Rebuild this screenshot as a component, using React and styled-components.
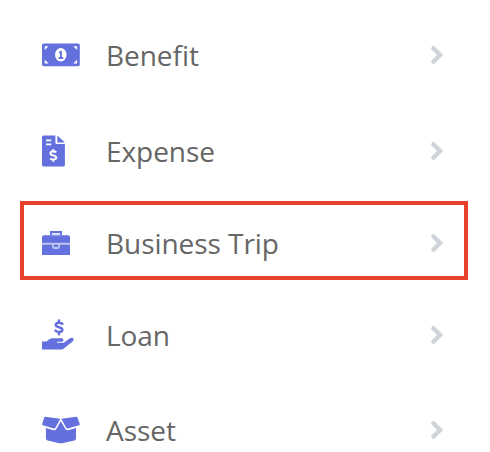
import React from 'react';
import styled, { createGlobalStyle } from 'styled-components';

const GlobalStyle = createGlobalStyle`
    body {
        margin: 0;
        background-color: #ffffff;
        font-family: 'Open Sans', sans-serif;
    }
`;

// Styled Components
const Menu = styled.nav`
    width: 490px;
    height: 452px;
    overflow: hidden;
    box-sizing: border-box;
    padding: 7px 22px 0 20px;
`;

const MenuItem = styled.div`
    display: flex;
    align-items: center;
    box-sizing: border-box;
    height: ${(props) => props.$height}px;
    margin: ${(props) => (props.$active ? '2px 0 7px' : '0')};
    padding: ${(props) => (props.$active ? '5px' : '0')} 20px 0 18px;
    border: 4px solid ${(props) => (props.$active ? '#e8412a' : 'transparent')};
`;

const IconSlot = styled.span`
    display: flex;
    width: 64px;
    color: #6370de;
`;

const Label = styled.span`
    flex: 1;
    font-size: 28px;
    line-height: 38px;
    letter-spacing: -0.05px;
    color: #666666;
`;

const Arrow = styled.svg`
    width: 14px;
    height: 22px;
    fill: none;
    stroke: #ced4da;
    stroke-width: 4.4;
    stroke-linecap: round;
`;

const DOLLAR = 'M3.1 -3.2C2.2 -4.2 0.9 -4.3 0 -4.3C-1.8 -4.3 -3 -3.5 -3 -2.2C-3 0.4 3.1 -0.5 3.1 2.2C3.1 3.5 1.7 4.3 0 4.3C-1.2 4.3 -2.4 3.9 -3.2 3.1M0 -6.4V-4.3M0 4.3V6.4';

const BillIcon = () => (
    <svg width="38" height="24" viewBox="0 0 38 24">
        <rect y="0.4" width="37.8" height="22.8" rx="1.6" fill="currentColor" />
        <path d="M2.7 3.2H6.5L2.7 7ZM35.1 3.2H31.3L35.1 7ZM2.7 20.4H6.5L2.7 16.6ZM35.1 20.4H31.3L35.1 16.6Z" fill="#fff" />
        <ellipse cx="18.8" cy="11.8" rx="5.8" ry="6.7" fill="#fff" />
        <path d="M17 9.7L19 8.8V15M16.6 15H21.2" fill="none" stroke="currentColor" strokeWidth="1.8" />
    </svg>
);

const InvoiceIcon = () => (
    <svg width="23" height="32" viewBox="0 0 23 32">
        <path d="M1.5 0.5H13.4V7.4Q13.4 9 15 9H22.9V30Q22.9 31.4 21.5 31.4H1.5Q0 31.4 0 30V2Q0 0.5 1.5 0.5ZM15.3 0.5L22.9 7.6H15.3Z" fill="currentColor" />
        <path d="M4 5.4H9.3M4 9.4H9.3" stroke="#fff" strokeWidth="1.9" />
        <path d={DOLLAR} transform="translate(11.3 20.5) scale(0.96)" fill="none" stroke="#fff" strokeWidth="2.1" />
    </svg>
);

const BriefcaseIcon = () => (
    <svg width="28" height="24" viewBox="0 0 28 24">
        <path d="M0 6.2Q0 4.2 2 4.2H26Q28 4.2 28 6.2V24H0Z" fill="currentColor" />
        <path d="M9.8 2.6H18.2V4.2H9.8Z" fill="#cbd0f5" />
        <path d="M9 4.5V1H19V4.5" fill="none" stroke="currentColor" strokeWidth="1.9" />
        <path d="M0 12.7H28M11 13.2V15.1Q11 17 12.6 17H15.4Q17 17 17 15.1V13.2" fill="none" stroke="#bdc4f2" strokeWidth="1.9" />
    </svg>
);

const LoanIcon = () => (
    <svg width="32" height="32" viewBox="0 0 32 32">
        <path d={DOLLAR} transform="translate(17 8.3) scale(1.08)" fill="none" stroke="currentColor" strokeWidth="2.3" strokeLinecap="round" />
        <path d="M0 22.5H4.5L7.3 20.3Q8.9 19.2 10.7 19.2H19.7A1.75 1.75 0 0 1 19.7 22.7H15V23.8H21.7L28 19.3C30.6 17.6 33 20.3 30.8 22.2L22.2 29.2Q20.9 30.4 19.2 30.4H0Z" fill="currentColor" />
    </svg>
);

const BoxIcon = () => (
    <svg width="38" height="28" viewBox="0 0 38 28">
        <path d="M3 0.8L18.4 2.7L13.2 11.9Q12.8 12.8 11.8 12.5L1 9.3Q-0.2 8.9 0.2 7.7L2.3 1.3Q2.5 0.7 3 0.8ZM34.6 0.8L19.2 2.7L24.4 11.9Q24.8 12.8 25.8 12.5L36.9 9.3Q38.1 8.9 37.7 7.7L35.3 1.3Q35.1 0.7 34.6 0.8Z" fill="currentColor" />
        <path d="M18.8 5.3L23.2 12.8Q24.2 14.7 26.2 14.2L34 11.9V22.3Q34 24 32.3 24.5L20.2 27.2Q18.8 27.5 17.4 27.2L5.6 24.5Q3.9 24 3.9 22.3V11.9L11.5 14.2Q13.5 14.7 14.5 12.8Z" fill="currentColor" />
    </svg>
);

const items = [
    { label: 'Benefit', Icon: BillIcon, height: 96 },
    { label: 'Expense', Icon: InvoiceIcon, height: 96 },
    { label: 'Business Trip', Icon: BriefcaseIcon, height: 79, active: true },
    { label: 'Loan', Icon: LoanIcon, height: 96 },
    { label: 'Asset', Icon: BoxIcon, height: 94 },
];

const App = () => (
    <>
        <GlobalStyle />
        <Menu>
            {items.map(({ label, Icon, height, active }) => (
                <MenuItem key={label} $height={height} $active={active}>
                    <IconSlot><Icon /></IconSlot>
                    <Label>{label}</Label>
                    <Arrow viewBox="0 0 14 22">
                        <path d="M3.4 4.4L10.1 11L3.4 17.6" />
                    </Arrow>
                </MenuItem>
            ))}
        </Menu>
    </>
);

export default App;
